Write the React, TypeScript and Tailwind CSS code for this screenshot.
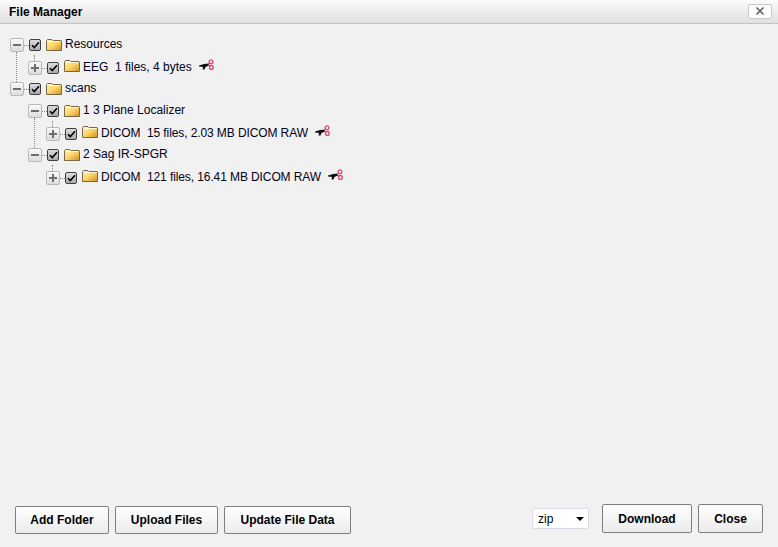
import { X } from 'lucide-react';

interface TreeRow {
  level: number;
  open: boolean;
  label: string;
  leaf?: boolean;
  lineDown?: boolean;
}

const rows: TreeRow[] = [
  { level: 0, open: true, label: 'Resources' },
  { level: 1, open: false, label: 'EEG\u00a0\u00a01 files, 4 bytes', leaf: true },
  { level: 0, open: true, label: 'scans' },
  { level: 1, open: true, label: '1 3 Plane Localizer', lineDown: true },
  { level: 2, open: false, label: 'DICOM\u00a0\u00a015 files, 2.03 MB DICOM RAW', leaf: true },
  { level: 1, open: true, label: '2 Sag IR-SPGR' },
  { level: 2, open: false, label: 'DICOM\u00a0\u00a0121 files, 16.41 MB DICOM RAW', leaf: true },
];

function FolderIcon() {
  return (
    <svg width="16" height="12" viewBox="0 0 16 12" className="shrink-0">
      <defs>
        <linearGradient id="folderFill" x1="0" y1="0" x2="1" y2="1">
          <stop offset="0" stopColor="#fff3b8" />
          <stop offset="0.5" stopColor="#fad568" />
          <stop offset="1" stopColor="#d08e1c" />
        </linearGradient>
      </defs>
      <path d="M0.5 1.5 L1.5 0.5 H6 L7 1.5 H15 L15.5 2 V11.5 H0.5 Z" fill="url(#folderFill)" stroke="#77684a" strokeWidth="1" />
      <path d="M1.5 2.5 H14.5" stroke="#fff9dc" strokeWidth="1" />
    </svg>
  );
}

function ScissorsIcon() {
  return (
    <svg width="16" height="13" viewBox="0 0 16 13" className="shrink-0">
      <path d="M1 6.5 L6 5 L11 4.5 L11 6.5 L7.5 8 L6.5 10.5 L4.5 10.5 L5 8 L1 7.5 Z" fill="#111" />
      <circle cx="13" cy="2.8" r="1.9" fill="none" stroke="#e0457f" strokeWidth="1.3" />
      <circle cx="13.4" cy="8.4" r="1.9" fill="none" stroke="#e0457f" strokeWidth="1.3" />
      <path d="M10.5 5.5 L12 4.2 M10.5 5.5 L12 7" stroke="#e0457f" strokeWidth="1" />
    </svg>
  );
}

function Toggle({ open }: { open: boolean }) {
  return (
    <div className="relative w-[14px] h-[14px] shrink-0 rounded-[2px] border border-[#b9b9b9] bg-gradient-to-b from-[#fafafa] to-[#dcdcdc] flex items-center justify-center">
      <div className="w-[8px] h-[2px] bg-[#6e6e6e]" />
      {!open && <div className="absolute w-[2px] h-[8px] bg-[#6e6e6e]" />}
    </div>
  );
}

function Check() {
  return (
    <div className="w-[12px] h-[12px] mt-[2px] shrink-0 rounded-[2px] border border-[#3f3f3f] bg-gradient-to-b from-[#dcdcdc] to-[#ababab] flex items-center justify-center">
      <svg width="9" height="8" viewBox="0 0 9 8">
        <path d="M1 4.2 L3.3 6.5 L8 1.2" fill="none" stroke="#000" strokeWidth="1.6" />
      </svg>
    </div>
  );
}

function Row({ row }: { row: TreeRow }) {
  const indent = row.level === 0 ? 'pl-[10px]' : row.level === 1 ? 'pl-[28px]' : 'pl-[46px]';
  const last = row.label.startsWith('scans');
  // the DICOM rows run a little tighter than the rest
  const tight = row.level === 2 ? 'tracking-[-0.1px]' : '';
  return (
    <div className={`relative flex items-center h-[22px] ${indent} ${row.leaf ? 'pt-[2px]' : ''}`}>
      <div className="relative flex items-center mt-[2px]">
        <Toggle open={row.open} />
        <div className="w-[5px] border-t border-dotted border-[#8a8a8a]" />
        {row.leaf && (
          <div className="absolute left-[6px] top-[-6px] h-[6px] border-l border-dotted border-[#8a8a8a]" />
        )}
        {(row.lineDown || (row.level === 0 && !last)) && (
          <div className="absolute left-[6px] top-[14px] h-[30px] border-l border-dotted border-[#8a8a8a]" />
        )}
      </div>
      <Check />
      <div className={`ml-[5px] mr-[3px] ${row.leaf ? '-mt-[2px]' : 'mt-[1px]'}`}>
        <FolderIcon />
      </div>
      <span className={`whitespace-nowrap ${tight}`}>{row.label}</span>
      {row.leaf && (
        <div className="ml-[6px] -mt-[4px]">
          <ScissorsIcon />
        </div>
      )}
    </div>
  );
}

function Btn({ label, w, h }: { label: string; w: string; h: string }) {
  return (
    <button className={`${w} ${h} rounded-[2px] border border-[#7f7f7f] bg-gradient-to-b from-[#ffffff] to-[#ebebeb] font-bold text-[12px] text-black`}>
      {label}
    </button>
  );
}

export default function App() {
  return (
    <div className="w-[778px] h-[547px] flex flex-col bg-[#f1f1f1] text-[12px] text-[#000018] font-['Liberation_Sans',Arial,sans-serif]">
      <div className="h-[24px] shrink-0 flex items-center justify-between pl-[9px] pr-[6px] border-b border-[#c4c4c4] bg-gradient-to-b from-[#fbfbfb] to-[#e0e0e0]">
        <span className="font-bold text-black">File Manager</span>
        <div className="w-[24px] h-[15px] -mt-[1px] border border-[#c8c8c8] rounded-[2px] bg-white flex items-center justify-center">
          <X size={12} strokeWidth={3.5} className="text-[#666]" />
        </div>
      </div>

      <div className="flex-1 pt-[9px]">
        {rows.map((row, index) => (
          <Row key={index} row={row} />
        ))}
      </div>

      <div className="flex items-end justify-between pl-[15px] pr-[15px] pb-[13px]">
        <div className="flex gap-[6px]">
          <Btn label="Add Folder" w="w-[94px]" h="h-[28px]" />
          <Btn label="Upload Files" w="w-[103px]" h="h-[28px]" />
          <Btn label="Update File Data" w="w-[127px]" h="h-[28px]" />
        </div>
        <div className="flex items-center mb-[1px]">
          <div className="w-[57px] h-[21px] mr-[13px] pl-[5px] pr-[4px] rounded-[2px] border border-[#dcdce4] bg-white flex items-center justify-between text-black">
            <span>zip</span>
            <div className="w-0 h-0 border-l-[4px] border-r-[4px] border-t-[4px] border-l-transparent border-r-transparent border-t-black" />
          </div>
          <div className="flex gap-[6px]">
            <Btn label="Download" w="w-[90px]" h="h-[29px]" />
            <Btn label="Close" w="w-[65px]" h="h-[29px]" />
          </div>
        </div>
      </div>
    </div>
  );
}
